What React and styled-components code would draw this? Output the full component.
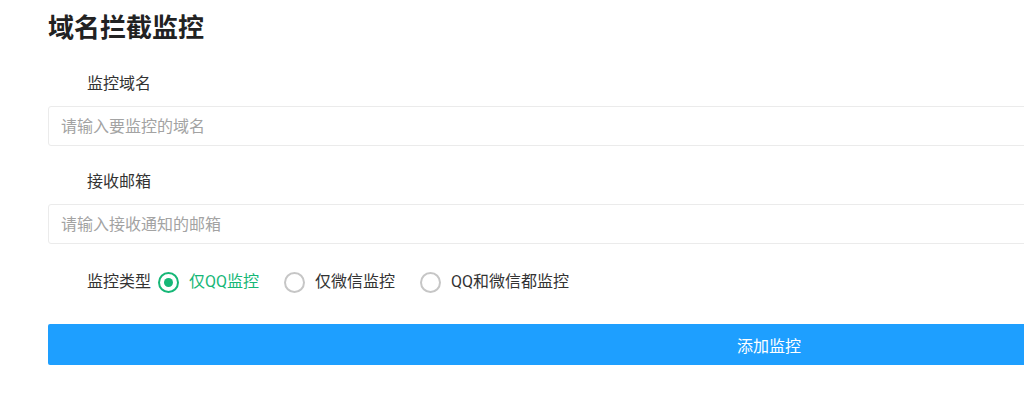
import styled, { createGlobalStyle } from "styled-components";
import { useState } from "react";

const GlobalStyle = createGlobalStyle`
  html, body {
    margin: 0;
    padding: 0;
    background: #fff;
    overflow-x: hidden;
  }
  body {
    font-family: Roboto, "Noto Sans CJK SC", "Noto Sans", sans-serif;
    color: #333;
  }
`;

const options = [
  { value: "qq", label: "仅QQ监控" },
  { value: "wechat", label: "仅微信监控" },
  { value: "both", label: "QQ和微信都监控" },
];

export default function App() {
  const [domain, setDomain] = useState("");
  const [email, setEmail] = useState("");
  const [type, setType] = useState("qq");

  return (
    <>
      <GlobalStyle />
      <Page>
        <Title>域名拦截监控</Title>
        <Form onSubmit={(e) => e.preventDefault()}>
          <Field>
            <FieldLabel>监控域名</FieldLabel>
            <TextInput
              placeholder="请输入要监控的域名"
              value={domain}
              onChange={(e) => setDomain(e.target.value)}
            />
          </Field>
          <Field>
            <FieldLabel>接收邮箱</FieldLabel>
            <TextInput
              placeholder="请输入接收通知的邮箱"
              value={email}
              onChange={(e) => setEmail(e.target.value)}
            />
          </Field>
          <RadioRow>
            <RowLabel>监控类型</RowLabel>
            <RadioGroup>
              {options.map((opt) => (
                <RadioOption
                  key={opt.value}
                  $checked={type === opt.value}
                  onClick={() => setType(opt.value)}
                >
                  <RadioCircle $checked={type === opt.value} />
                  <span>{opt.label}</span>
                </RadioOption>
              ))}
            </RadioGroup>
          </RadioRow>
          <SubmitButton type="submit">添加监控</SubmitButton>
        </Form>
      </Page>
    </>
  );
}

const Page = styled.div`
  width: 1442px;
  padding: 10px 0 40px 48px;
`;

const Title = styled.h2`
  margin: 0;
  font-size: 26px;
  line-height: 36px;
  font-weight: 700;
  color: #222;
`;

const Form = styled.form`
  display: flex;
  flex-direction: column;
  margin-top: 26px;
`;

const Field = styled.div`
  display: flex;
  flex-direction: column;
  gap: 10px;
  margin-bottom: 24px;
`;

const FieldLabel = styled.label`
  padding-left: 39px;
  font-size: 16px;
  line-height: 24px;
  color: #333;
`;

const TextInput = styled.input`
  box-sizing: border-box;
  width: 100%;
  height: 40px;
  padding: 0 12px;
  border: 1px solid #ebebeb;
  border-radius: 3px;
  font-family: inherit;
  font-size: 16px;
  color: #333;
  outline: none;
  &::placeholder {
    color: #a3a3a3;
  }
`;

const RadioRow = styled.div`
  display: flex;
  align-items: center;
  padding-left: 39px;
  height: 24px;
  margin-top: 2px;
  margin-bottom: 30px;
`;

const RowLabel = styled.span`
  font-size: 16px;
  line-height: 24px;
  margin-right: 7px;
  color: #333;
`;

const RadioGroup = styled.div`
  display: flex;
  align-items: center;
  gap: 25px;
`;

const RadioOption = styled.label`
  display: flex;
  align-items: center;
  gap: 10px;
  font-size: 16px;
  line-height: 24px;
  cursor: pointer;
  color: ${(p) => (p.$checked ? "#16b777" : "#333")};
`;

const RadioCircle = styled.span`
  box-sizing: border-box;
  width: 21px;
  height: 21px;
  border-radius: 50%;
  border: 2px solid ${(p) => (p.$checked ? "#16b777" : "#c6c6c6")};
  display: flex;
  align-items: center;
  justify-content: center;
  &::after {
    content: "";
    display: ${(p) => (p.$checked ? "block" : "none")};
    width: 9px;
    height: 9px;
    border-radius: 50%;
    background: #16b777;
  }
`;

const SubmitButton = styled.button`
  height: 41px;
  width: 100%;
  border: none;
  border-radius: 2px;
  background: #1e9fff;
  color: #fff;
  font-family: inherit;
  font-size: 16px;
  cursor: pointer;
`;
